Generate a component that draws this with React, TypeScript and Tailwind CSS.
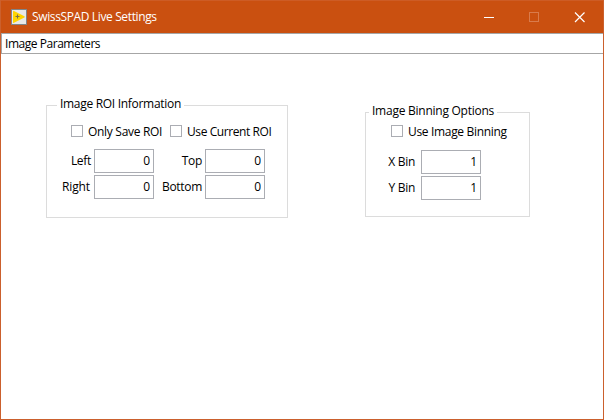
import { useState } from 'react';
import type { ReactNode } from 'react';

function Check({ label, tracking }: { label: string; tracking: string }) {
  const [on, setOn] = useState(false);
  return (
    <button type="button" onClick={() => setOn(!on)} className="flex h-3 items-center gap-[5px]">
      <span className="flex size-3 items-center justify-center border border-[#abadb3] bg-white">
        {on && <span className="size-1.5 bg-black" />}
      </span>
      <span className={`whitespace-nowrap pt-[2px] leading-4 ${tracking}`}>{label}</span>
    </button>
  );
}

function Field({ label, value, labelClass }: { label: string; value: string; labelClass: string }) {
  return (
    <label className="flex h-6 items-center">
      <span className={`whitespace-nowrap text-right ${labelClass}`}>{label}</span>
      <input
        defaultValue={value}
        className="h-6 w-[60px] border border-[#abadb3] bg-white pr-[3px] pb-[1px] text-right outline-none"
      />
    </label>
  );
}

function Group({ title, className, legendClass, children }: { title: string; className: string; legendClass: string; children: ReactNode }) {
  return (
    <section className={`flex flex-col items-start border border-[#dcdcdc] ${className}`}>
      <h2 className={`h-4 whitespace-nowrap bg-white leading-4 ${legendClass}`}>{title}</h2>
      {children}
    </section>
  );
}

export default function App() {
  return (
    <div className="flex h-[420px] w-[604px] flex-col overflow-hidden border border-t-0 border-[#cb602d] bg-white font-['Open_Sans','Noto_Sans',sans-serif] text-[12px] text-black">
      <header className="flex h-[33px] shrink-0 items-center border-t border-[#cd5c25] bg-[#ca5010] pl-[10px] text-white">
        <svg className="size-4 shrink-0" viewBox="0 0 16 16">
          <rect x="0.5" y="0.5" width="15" height="15" fill="#e8e8e8" stroke="#808488" />
          <path d="M2 2.2Q2 1.6 3 2L13.4 7.2Q14.3 8 13.4 8.6L3 13.8Q2 14.2 2 13.4Z" fill="#ffd500" />
          <path d="M4.5 7.5H8.5M6.5 5.5V9.5" stroke="#77704a" />
        </svg>
        <h1 className="ml-[5px] whitespace-nowrap leading-4 tracking-[-0.37px]">SwissSPAD Live Settings</h1>
        <div className="ml-auto flex items-center pr-[18px]">
          <svg className="h-[11px] w-[101px]" viewBox="0 0 101 11" fill="none" shapeRendering="crispEdges">
            <path d="M0 5.5H10" stroke="#fff" />
            <rect x="45.5" y="0.5" width="9" height="9" stroke="#d97b4c" />
            <path d="M91 0.5L100.5 10M100.5 0.5L91 10" stroke="#fff" strokeWidth="1.2" shapeRendering="auto" />
          </svg>
        </div>
      </header>
      <nav className="flex h-[21px] shrink-0 items-center border-y border-l border-[#a6a6a6] pl-[3px]">
        <span className="whitespace-nowrap pt-px leading-4 tracking-[-0.46px]">Image Parameters</span>
      </nav>
      <main className="flex items-start pl-[45px] pt-[51px]">
        <Group title="Image ROI Information" className="h-[113px] w-[242px]" legendClass="-mt-[10px] ml-[10px] px-[3px] tracking-[-0.3px]">
          <div className="ml-6 mt-[13px] flex">
            <div className="w-[99px]"><Check label="Only Save ROI" tracking="tracking-[-0.3px]" /></div>
            <Check label="Use Current ROI" tracking="tracking-[-0.42px]" />
          </div>
          <div className="mt-3 flex">
            <div className="flex flex-col gap-[2px]">
              <Field label="Left" value="0" labelClass="w-[47px] pr-[3px] tracking-[-0.3px]" />
              <Field label="Right" value="0" labelClass="w-[47px] pr-[4px] tracking-[-0.1px]" />
            </div>
            <div className="flex flex-col gap-[2px]">
              <Field label="Top" value="0" labelClass="w-[51px] pr-[3px] tracking-[-0.3px]" />
              <Field label="Bottom" value="0" labelClass="w-[51px] pr-[3px] tracking-[-0.3px]" />
            </div>
          </div>
        </Group>
        <Group title="Image Binning Options" className="ml-[77px] mt-[7px] h-[105px] w-[165px]" legendClass="-mt-[10px] ml-[3px] px-[3px] tracking-[-0.25px]">
          <div className="ml-[25px] mt-[6px]"><Check label="Use Image Binning" tracking="tracking-[-0.33px]" /></div>
          <div className="mt-[13px] flex flex-col gap-[2px]">
            <Field label="X Bin" value="1" labelClass="w-[55px] pr-[6px] tracking-[-0.3px]" />
            <Field label="Y Bin" value="1" labelClass="w-[55px] pr-[6px] tracking-[-0.3px]" />
          </div>
        </Group>
      </main>
    </div>
  );
}
